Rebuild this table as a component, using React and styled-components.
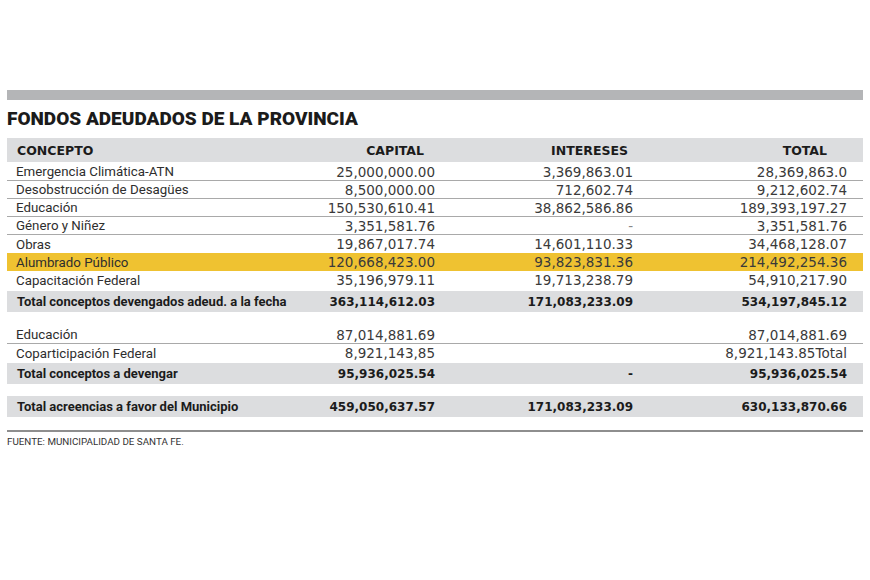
import React from "react";
import styled, { createGlobalStyle } from "styled-components";

const Global = createGlobalStyle`
  html, body { margin:0; padding:0; background:#fff; }
  body { font-family: Roboto, "Liberation Sans", sans-serif; color:#222; }
`;

const Sheet = styled.div`
  width:856px; margin:0 7px; padding-top:90px;
`;
const TopBar = styled.div`
  height:10px; background:#b4b5b7;
`;
const Title = styled.h2`
  margin:8px 0 8px; font-family: Roboto, sans-serif; font-weight:900;
  font-size:19px; line-height:22px; color:#1b1b1b;
`;

const Grid = styled.div`
  display:grid; grid-template-columns: 1fr 140px 198px 214px;
  padding:0 16px 0 0; align-items:center; box-sizing:border-box;
`;
const HeaderRow = styled(Grid)`
  height:24px; background:#dcdddf; margin-bottom:1px;
`;
const HeadCell = styled.div`
  font-family: "DejaVu Sans", sans-serif; font-weight:700; font-size:12.5px;
  color:#1b1b1b; text-align:${p => (p.$left ? "left" : "right")};
  padding-left:${p => (p.$left ? "10px" : "0")};
  padding-right:${p => p.$inset || 0}px;
`;
const Row = styled(Grid)`
  height:18px;
  background:${p => (p.$hl ? "#efc231" : "transparent")};
  border-bottom:${p => (p.$lined ? "1px solid #a9a9a9" : "none")};
`;
const Band = styled(Grid)`
  height:21px; background:#dcdddf; margin-top:${p => p.$top || 0}px;
`;
const Label = styled.div`
  padding-left:${p => (p.$bold ? "10px" : "9px")};
  font-size:${p => (p.$bold ? "13px" : "13.3px")};
  font-weight:${p => (p.$bold ? 700 : 400)};
  color:${p => (p.$bold ? "#1b1b1b" : "#2e2e2e")}; white-space:nowrap;
`;
const Num = styled.div`
  text-align:right; white-space:nowrap;
  font-family: "DejaVu Sans", sans-serif;
  font-size:${p => (p.$bold ? "12px" : "13.5px")};
  font-weight:${p => (p.$bold ? 700 : 400)};
  color:${p => (p.$bold ? "#1b1b1b" : p.$dim ? "#888" : "#3a3a3a")};
`;
const Gap = styled.div`height:${p => p.$h}px;`;
const Rule = styled.div`
  height:2px; background:#8e8e8e;
`;
const Source = styled.div`
  margin-top:4px; font-size:9.8px; line-height:12px; color:#333;
`;

const rows1 = [
  ["Emergencia Climática-ATN", "25,000,000.00", "3,369,863.01", "28,369,863.0", true],
  ["Desobstrucción de Desagües", "8,500,000.00", "712,602.74", "9,212,602.74", true],
  ["Educación", "150,530,610.41", "38,862,586.86", "189,393,197.27", true],
  ["Género y Niñez", "3,351,581.76", "-", "3,351,581.76", true],
  ["Obras", "19,867,017.74", "14,601,110.33", "34,468,128.07", false],
  ["Alumbrado Público", "120,668,423.00", "93,823,831.36", "214,492,254.36", false, true],
  ["Capacitación Federal", "35,196,979.11", "19,713,238.79", "54,910,217.90", false],
];

const rows2 = [
  ["Educación", "87,014,881.69", "", "87,014,881.69", true],
  ["Coparticipación Federal", "8,921,143,85", "", "8,921,143.85Total", false],
];

function DataRow({ r }) {
  return (
    <Row $lined={r[4]} $hl={r[5]}>
      <Label>{r[0]}</Label>
      <Num>{r[1]}</Num>
      <Num $dim={r[2] === "-"}>{r[2]}</Num>
      <Num>{r[3]}</Num>
    </Row>
  );
}

function TotalRow({ label, a, b, c, top }) {
  return (
    <Band $top={top}>
      <Label $bold>{label}</Label>
      <Num $bold>{a}</Num>
      <Num $bold>{b}</Num>
      <Num $bold>{c}</Num>
    </Band>
  );
}

export default function App() {
  return (
    <>
      <Global />
      <Sheet>
        <TopBar />
        <Title>FONDOS ADEUDADOS DE LA PROVINCIA</Title>
        <HeaderRow>
          <HeadCell $left>CONCEPTO</HeadCell>
          <HeadCell $inset={11}>CAPITAL</HeadCell>
          <HeadCell $inset={5}>INTERESES</HeadCell>
          <HeadCell $inset={20}>TOTAL</HeadCell>
        </HeaderRow>
        {rows1.map(r => <DataRow key={r[0]} r={r} />)}
        <TotalRow top={2} label="Total conceptos devengados adeud. a la fecha"
          a="363,114,612.03" b="171,083,233.09" c="534,197,845.12" />
        <Gap $h={14} />
        {rows2.map(r => <DataRow key={r[0]} r={r} />)}
        <TotalRow top={1} label="Total conceptos a devengar"
          a="95,936,025.54" b="-" c="95,936,025.54" />
        <Gap $h={12} />
        <TotalRow label="Total acreencias a favor del Municipio"
          a="459,050,637.57" b="171,083,233.09" c="630,133,870.66" />
        <Gap $h={13} />
        <Rule />
        <Source>FUENTE: MUNICIPALIDAD DE SANTA FE.</Source>
      </Sheet>
    </>
  );
}
